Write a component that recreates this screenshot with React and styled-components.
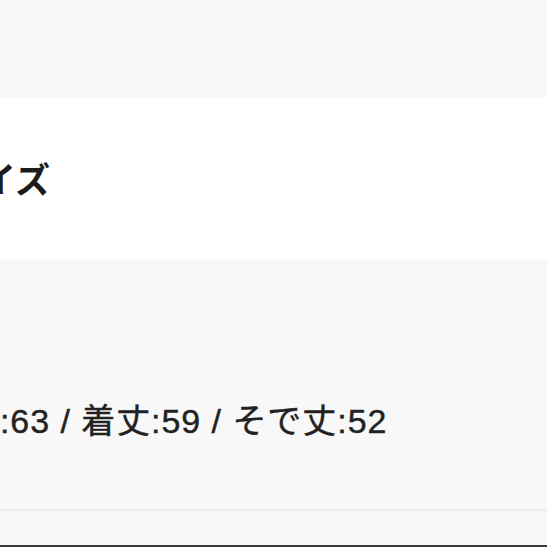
import React from "react";
import styled, { createGlobalStyle } from "styled-components";

const GlobalStyle = createGlobalStyle`
  html, body {
    margin: 0;
    padding: 0;
    background: #f8f8f8;
    overflow: hidden;
  }
  body {
    font-family: "Liberation Sans", "Noto Sans CJK JP", sans-serif;
    color: #222;
  }
`;

const Page = styled.div`
  width: 547px;
  height: 547px;
  display: flex;
  flex-direction: column;
  background: #f8f8f8;
  overflow: hidden;
`;

const TopSpace = styled.div`
  height: 97px;
  flex-shrink: 0;
`;

const TitleBar = styled.div`
  height: 163px;
  flex-shrink: 0;
  background: #ffffff;
  display: flex;
  align-items: center;
`;

const Title = styled.h2`
  margin: -3px 0 0 ${(p) => p.offset}px;
  font-size: 35px;
  font-weight: 700;
  color: #1c1c1c;
  white-space: nowrap;
  font-family: "Noto Sans CJK JP", sans-serif;
`;

const Body = styled.div`
  flex: 1;
  display: flex;
  align-items: center;
  padding-top: 68px;
  border-bottom: 2px solid #ebebeb;
`;

const Sizes = styled.p`
  margin: 0 0 0 ${(p) => p.offset}px;
  font-size: 34px;
  letter-spacing: 0.95px;
  color: #222;
  -webkit-text-stroke: 0.4px #222;
  white-space: nowrap;
`;

const Bottom = styled.div`
  height: 34px;
  flex-shrink: 0;
  border-bottom: 2px solid #3a3a3a;
`;

export default function App() {
  return (
    <Page>
      <GlobalStyle />
      <TopSpace />
      <TitleBar>
        <Title offset={-54}>サイズ</Title>
      </TitleBar>
      <Body>
        <Sizes offset={-70}>身幅:63 / 着丈:59 / そで丈:52</Sizes>
      </Body>
      <Bottom />
    </Page>
  );
}
